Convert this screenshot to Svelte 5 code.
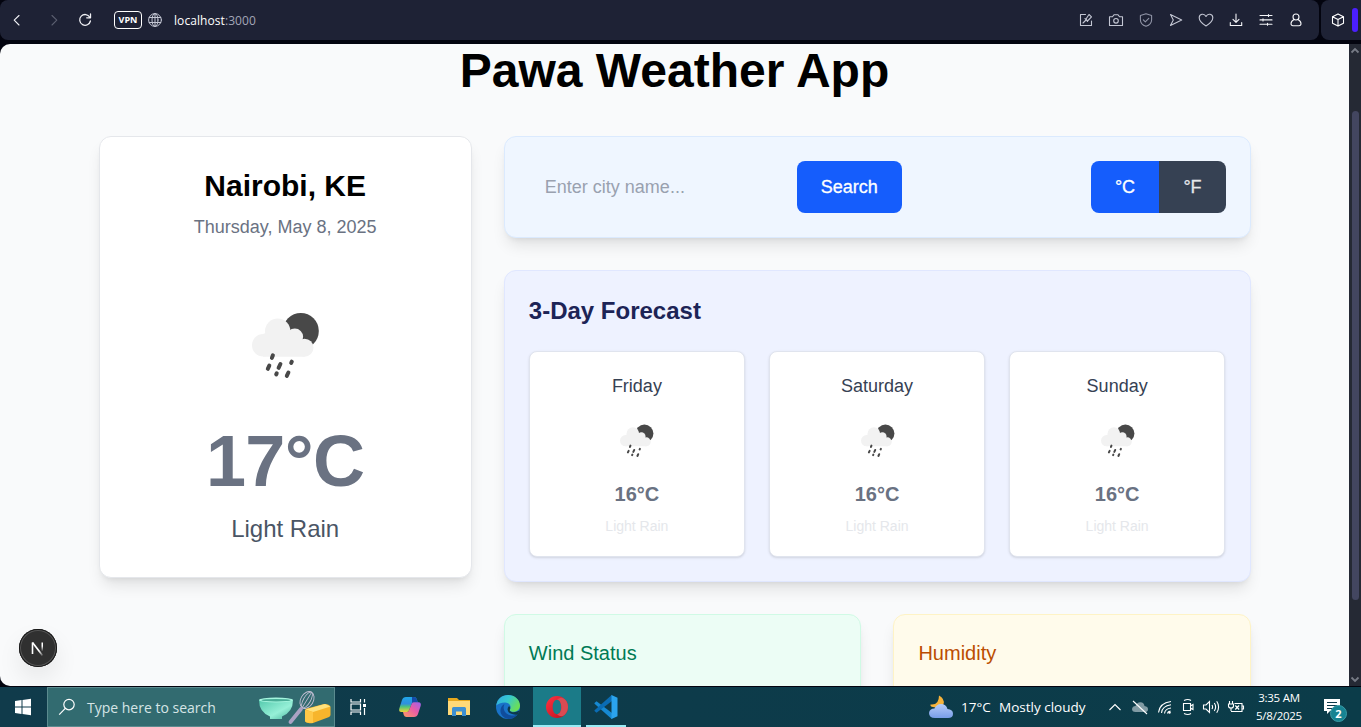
<script>
  const days = ['Friday', 'Saturday', 'Sunday'];
</script>

{#snippet rain(size)}
  <svg width={size} height={size} viewBox="0 0 68 68">
    <circle cx="48.8" cy="19" r="18" fill="#484848" />
    <g fill="#f2f2f2">
      <circle cx="11.3" cy="33.3" r="11.3" />
      <circle cx="25.7" cy="19.3" r="12.7" />
      <circle cx="42.8" cy="24.8" r="8.3" />
      <circle cx="52.5" cy="35.7" r="9" />
      <path d="M11 22L25 17L43 24L53 44.7H11Z" />
    </g>
    <path d="M20.9 43.3l-1 2.6M17.3 53.6l-1.500 3.200M28.400 52l-1.800 3.800M39.800 49.700l-.6 1.200M24.700 61.300l-.5 1.100M36.400 60.500l-1.600 3.400" stroke="#484848" stroke-width="4" stroke-linecap="round" />
  </svg>
{/snippet}

<div class="screen">
  <header>
    <div class="bar">
      <svg class="nav" viewBox="0 0 16 16"><path d="M10 3.5L5.2 8.2L10 13" /></svg>
      <svg class="nav dim" viewBox="0 0 16 16"><path d="M6 3.5L10.8 8.2L6 13" /></svg>
      <svg class="nav reload" viewBox="0 0 16 16"><path d="M12.8 5.2A5.4 5.4 0 1 0 13.4 9M13.5 2v3.8H9.7" /></svg>
      <span class="vpn">VPN</span>
      <svg class="globe" viewBox="0 0 16 16"><circle cx="8" cy="8" r="6.4" /><ellipse cx="8" cy="8" rx="3" ry="6.4" /><path d="M2.3 5.5h11.4M2.3 10.5h11.4M8 1.6v12.8" /></svg>
      <span class="url">localhost<i>:3000</i></span>
      <div class="tools">
        <svg viewBox="0 0 16 16"><path d="M7.5 2.5H2.5v11h11V9" /><path d="M5 11l3-3M7 6.500l2.500 3M8 7l3-4.500 2.500 2.300L9.500 9z" /></svg>
        <svg viewBox="0 0 16 16"><path d="M1.500 4.800h3L6 2.700h4l1.500 2.100h3v8.700h-13z" /><circle cx="8" cy="8.800" r="2.300" /></svg>
        <svg class="soft" viewBox="0 0 16 16"><path d="M8 1.700l5.600 1.800v4.200c0 3.200-2.500 5.500-5.600 6.600-3.100-1.100-5.600-3.400-5.600-6.600V3.500z" /><path d="M5.300 7.900l2 2 3.500-3.600" /></svg>
        <svg viewBox="0 0 16 16"><path d="M2.500 2.500L13.700 8 2.500 13.500 5.300 8z" /></svg>
        <svg viewBox="0 0 16 16"><path d="M8 14C4 11.500 1.200 8.500 1.200 5.700c0-3.800 5-4.800 6.800-1.200 1.800-3.600 6.800-2.600 6.800 1.200C14.800 8.500 12 11.500 8 14z" /></svg>
        <svg class="lit" viewBox="0 0 16 16"><path d="M8 2v8.300M5 7.300l3 3 3-3M2.300 10.500v3h11.400v-3" /></svg>
        <svg class="lit" viewBox="0 0 16 16"><path d="M2 3.500h12M2 7.900h12M2 12.300h12M10.500 2.500v2M5 6.900v2M9.500 11.300v2" /></svg>
        <svg class="lit" viewBox="0 0 16 16"><circle cx="8" cy="5" r="3" /><path d="M6 7.400c-2 1-3 2.600-3 4.400 0 1.200.8 1.900 2 1.900h6c1.200 0 2-.7 2-1.900 0-1.800-1-3.400-3-4.400" /></svg>
      </div>
    </div>
    <div class="side">
      <svg viewBox="0 0 16 16"><path d="M8 1.900l5.500 2.800v6.500L8 14.100l-5.500-2.900V4.700zM2.500 4.700L8 7.600l5.500-2.900M8 7.600v6.500" /></svg>
      <b></b>
    </div>
  </header>

  <div class="view">
    <main>
      <h1>Pawa Weather App</h1>
      <div class="layout">
        <section class="card now">
          <h2>Nairobi, KE</h2>
          <p class="date">Thursday, May 8, 2025</p>
          <div class="picture">{@render rain(68)}</div>
          <p class="temp">17°C</p>
          <p class="sky">Light Rain</p>
        </section>
        <div class="column">
          <section class="card find">
            <input placeholder="Enter city name..." />
            <button class="go">Search</button>
            <div class="units"><button>°C</button><button>°F</button></div>
          </section>
          <section class="card forecast">
            <h3>3-Day Forecast</h3>
            <div class="days">
              {#each days as day}
                <article>
                  <p class="day">{day}</p>
                  <div class="mini">{@render rain(34)}</div>
                  <p class="deg">16°C</p>
                  <p class="faint">Light Rain</p>
                </article>
              {/each}
            </div>
          </section>
          <div class="stats">
            <section class="card wind">Wind Status</section>
            <section class="card humid">Humidity</section>
          </div>
        </div>
      </div>
      <div class="dev">
        <svg width="38" height="38" viewBox="0 0 38 38">
          <defs>
            <linearGradient id="fade1" x1="0" y1="0" x2="0" y2="1"><stop offset=".4" stop-color="#fff" /><stop offset="1" stop-color="#fff" stop-opacity="0" /></linearGradient>
            <linearGradient id="fade2" x1="0" y1="0" x2="1" y2="1"><stop offset=".65" stop-color="#fff" /><stop offset="1" stop-color="#fff" stop-opacity=".2" /></linearGradient>
          </defs>
          <path d="M13.500 25V13.500" stroke="#fff" stroke-width="1.600" />
          <path d="M13.500 13.500L23.500 26.500" stroke="url(#fade2)" stroke-width="1.700" />
          <rect x="22.500" y="13.500" width="1.500" height="9" fill="url(#fade1)" />
        </svg>
      </div>
    </main>
    <div class="scroll">
      <svg width="12" height="12" viewBox="0 0 12 12"><path d="M2.500 8.500L6 5l3.500 3.500" /></svg>
      <div class="thumb"></div>
      <svg width="12" height="12" viewBox="0 0 12 12"><path d="M2.500 3.500L6 7l3.500-3.500" /></svg>
    </div>
  </div>

  <footer>
    <div class="start"><svg width="18" height="18" viewBox="0 0 18 18"><path fill="#fff" d="M1 3l6.500-1v6.500H1zM8.500 1.900L17 .8v7.700H8.500zM1 9.500h6.500V16L1 15zM8.500 9.500H17v7.700l-8.500-1.100z" /></svg></div>
    <div class="search">
      <svg width="18" height="18" viewBox="0 0 18 18" fill="none" stroke="#fff" stroke-width="1.200"><circle cx="11" cy="6.600" r="5.200" /><path d="M7.300 10.300L1.200 16.600" /></svg>
      <span>Type here to search</span>
      <svg class="baking" width="76" height="36" viewBox="0 0 76 36">
        <defs>
          <linearGradient id="bowl" x1="0" y1="0" x2="1" y2="1"><stop stop-color="#54c9ad" /><stop offset=".6" stop-color="#96f0d7" /><stop offset="1" stop-color="#46b39a" /></linearGradient>
        </defs>
        <path d="M2 11q0 12 11 16.500v2.500h12v-2.500q11-4.500 11-16.500z" fill="url(#bowl)" />
        <ellipse cx="19" cy="11" rx="17" ry="2.500" fill="#a4f5de" /><ellipse cx="19" cy="11.200" rx="14.500" ry="1.300" fill="#49ae97" />
        <g fill="none" stroke="#c5c0d5" stroke-width=".9"><ellipse cx="50" cy="11" rx="6.300" ry="9" transform="rotate(30 50 11)" /><ellipse cx="50" cy="11" rx="3.500" ry="9" transform="rotate(30 50 11)" /><path d="M54.500 3.500L45 19" /></g>
        <path d="M33.500 33L44 20" stroke="#aaa2c4" stroke-width="3.800" stroke-linecap="round" />
        <path d="M48 21.500q0-1.500 2-2L67 15q2-.4 4 .5 2.500 1 2.500 2.500v8q0 1.500-2 2.300L56 34q-1.500.5-3.500.2l-3-.6q-1.500-.3-1.500-2z" fill="#f7b52c" /><path d="M48.500 20.500L68 15l5.500 2.500L56 23z" fill="#ffe27c" /><path d="M48 21l8 2v11l-5.500-.4Q48 33.500 48 31.500z" fill="#ffc847" />
      </svg>
    </div>
    <div class="app view-tasks"><svg width="18" height="18" viewBox="0 0 18 18" fill="none" stroke="#fff" stroke-width="1.200"><path d="M2 1v3h9.500V1M2 17v-3h9.500v3" /><path d="M2 6h9.500v6H2zM15.500 1v3.500M15.500 10v7" /><path d="M14 6h3v3h-3z" fill="#fff" stroke="none" /></svg></div>
    <div class="app wide">
      <svg width="24" height="24" viewBox="0 0 24 24">
        <defs>
          <linearGradient id="cpa" x1="0" y1="0" x2="0" y2="1"><stop stop-color="#20a7e8" /><stop offset=".45" stop-color="#2f8fdf" /><stop offset=".65" stop-color="#4fc37a" /><stop offset="1" stop-color="#f1d438" /></linearGradient>
          <linearGradient id="cpb" x1="1" y1="0" x2="0" y2="1"><stop stop-color="#9a63ef" /><stop offset=".45" stop-color="#ea5ba7" /><stop offset="1" stop-color="#ff9c62" /></linearGradient>
        </defs>
        <path d="M8 2h8q2 0 2.700 2l1 3.200h-4q-1.500 0-2 1.600L11 15.500Q10.300 17 8.700 17H3.500Q.5 17 1.300 13.500L4 5Q5 2 8 2z" fill="url(#cpa)" />
        <path d="M14 2h2q2 0 2.700 2l1 3.200h-4q-1.200 0-1.700 1.600z" fill="#164ba8" />
        <path d="M16 22H8.500q-2 0-2.700-2L5 17h3.700q1.600 0 2.300-1.500l2.700-6.700q.5-1.600 2-1.600h4.800q3 0 2.200 3.500L20 19q-1 3-4 3z" fill="url(#cpb)" />
      </svg>
    </div>
    <div class="app shift">
      <svg width="24" height="22" viewBox="0 0 24 22"><path d="M1 2h9l2 2h11v15H1z" fill="#e8a81d" /><path d="M1 5h22v14H1z" fill="#ffd978" /><path d="M5 20v-7.500Q5 11 6.500 11h11q1.500 0 1.500 1.500V20h-4v-4.500H9V20z" fill="#3d8fd1" /></svg>
    </div>
    <div class="app shift">
      <svg width="26" height="26" viewBox="0 0 26 26">
        <defs>
          <linearGradient id="edg" x1="0" y1="0" x2="1" y2=".5"><stop stop-color="#32a8e4" /><stop offset=".5" stop-color="#35c8cf" /><stop offset="1" stop-color="#6ade58" /></linearGradient>
        </defs>
        <circle cx="13" cy="13" r="12" fill="#1973c8" />
        <path d="M1.300 11.500C2.200 5 7 1 13 1c7 0 12 5 12 10.500 0 4-3 6.300-6.500 6.300-3 0-4.500-1.300-3.500-2.800 1.800-2.500-.5-6.500-5-6.500-4 0-7.500 1.500-8.700 3z" fill="url(#edg)" />
        <path d="M9.500 10C7 15 10 20.500 16 21.500c3 .5 5.500-.7 7.500-2.500C21 23 17.500 25 13.500 25 8 24.500 5 20 5.500 16 5.800 13 7.500 11 9.500 10z" fill="#104c9b" />
        <path d="M17 20Q13 19 12.500 15.500q0-2 1.500-3.500 2 1.500.8 3.700-.7 1.600 2 2.300 3.500.7 7.700-1.500l-1.500 4q-3 .5-6-.5z" fill="#0d3a4a" />
      </svg>
    </div>
    <div class="app opera">
      <svg width="24" height="24" viewBox="0 0 24 24">
        <defs><linearGradient id="opr" x1="0" y1="0" x2="1" y2="1"><stop stop-color="#ff3342" /><stop offset="1" stop-color="#b90e1c" /></linearGradient></defs>
        <path fill-rule="evenodd" fill="url(#opr)" d="M12 1a11 11 0 1 0 0 22 11 11 0 1 0 0-22zm0 3.800c2.800 0 4.300 3.300 4.300 7.200s-1.500 7.200-4.300 7.200-4.300-3.300-4.300-7.200S9.200 4.800 12 4.800z" />
        <path d="M12 4.800Q16 .9 20 4.500 23 7.500 23 12t-3.300 7.700Q16 23 12 19.200c2.800 0 4.300-3.300 4.300-7.200S14.800 4.800 12 4.800z" fill="#d94b53" />
      </svg>
    </div>
    <div class="app code">
      <svg width="26" height="26" viewBox="0 0 26 26"><path d="M1.500 9L3.500 7.200 19 19v6.200L1.500 9.800z" fill="#1689d2" /><path d="M1.500 17l2 1.800L19 7V.8L1.500 16.200z" fill="#0a6cb4" /><path d="M18.500 1l6 2.800v18.400l-6 2.800z" fill="#2ba4ee" /></svg>
    </div>
    <div class="weather">
      <svg width="26" height="26" viewBox="0 0 26 26">
        <defs><linearGradient id="cl" x1="0" y1="0" x2="0" y2="1"><stop stop-color="#b6ccf9" /><stop offset="1" stop-color="#789ee9" /></linearGradient></defs>
        <path d="M11 1.500Q17 5 15.500 10 13 15.500 5 13 2 12.500 2.500 10.500 11 11.500 11 1.500z" fill="#f6b33b" />
        <path d="M7 24Q1 24 1 19q.5-4.500 5.500-4.500Q8.500 10 13 10q5 0 6.500 5 5.500.5 5.500 4.700 0 4.300-5 4.300z" fill="url(#cl)" />
      </svg>
      <span class="wt">17°C</span><span class="ws">Mostly cloudy</span>
    </div>
    <div class="tray">
      <svg width="14" height="16" viewBox="0 0 14 16"><path d="M1.500 11L7 5.500l5.500 5.500" /></svg>
      <svg class="t2" width="18" height="16" viewBox="0 0 18 16"><path d="M4.500 13Q1 13 1 10q.5-3 3.500-3Q6 3 9.500 3.200 13 3.500 13.500 7q3.500.5 3.500 3.200Q17 13 14 13z" fill="#819ba4" stroke="none" /><path d="M2 2l14 13" /></svg>
      <svg class="t3" width="16" height="16" viewBox="0 0 16 16"><path d="M1.500 13.500Q2.500 4 14 2.500M4.500 14Q5 7 14 5.700M7.500 14.500q.5-4.700 6.500-5.500M10.500 14.500q.2-2 3-2.500" /><circle cx="12.500" cy="13.500" r="1.200" fill="#fff" stroke="none" /></svg>
      <svg class="t4" width="16" height="18" viewBox="0 0 16 18"><path d="M3.500 5.500h7v7h-7zM10.500 8l2.500-1.500v5L10.500 10M4 2.500Q8 .5 11 2.500M4 15.500q4 2 7 0" /></svg>
      <svg class="t5" width="18" height="16" viewBox="0 0 18 16"><path d="M1.500 6h2.500l3.500-3.500v11L4 10H1.500zM10 6q1.200 2 0 4M12.300 4q2.700 4 0 8M14.700 2.300q3.800 5.700 0 11.400" /></svg>
      <svg class="t6" width="18" height="16" viewBox="0 0 18 16"><path d="M2.500 2v3M5.500 2v3M1.500 5h5v2Q6.500 9 4 9 1.500 9 1.500 7zM4 9v3M7.500 4.500H15v8H4M15.500 7h1v3h-1M8.300 6.500l3.800 4M12.100 6.500l-3.800 4" /></svg>
    </div>
    <div class="clock"><span>3:35 AM</span><span>5/8/2025</span></div>
    <div class="note">
      <svg width="18" height="18" viewBox="0 0 18 18"><path fill="#fff" d="M1 1h16v12H7l-3 3v-3H1z" /><path d="M4 4.500h10M4 7.500h10M4 10.500h6" stroke="#0d3a4a" stroke-width="1.100" /></svg>
      <b>2</b>
    </div>
  </footer>
</div>

<style>
  :global(body) { background: #03040f; overflow: hidden; }
  * { box-sizing: border-box; }
  h1, h2, h3, p { margin: 0; }
  svg { flex: none; display: block; }
  .screen { width: 1361px; height: 727px; display: flex; flex-direction: column; background: #03040f; overflow: hidden; font-family: "Liberation Sans", Arial, sans-serif; }
  header { height: 40px; flex: none; display: flex; gap: 2px; font-family: "Open Sans", "Noto Sans", sans-serif; }
  header svg { width: 16px; height: 16px; fill: none; stroke: #c3c6d3; stroke-width: 1.1; stroke-linejoin: round; stroke-linecap: round; }
  .bar { width: 1319px; flex: none; background: #1e2235; border-radius: 8px; display: flex; align-items: center; padding-left: 9px; }
  .bar .nav { stroke: #f0f1f5; margin-right: 21px; }
  .bar .dim { stroke: #5b5f70; margin-right: 15px; }
  .bar .reload { margin-right: 21px; stroke-width: 1.3; }
  .vpn { width: 28px; height: 18px; border: 1.5px solid #fff; border-radius: 4px; color: #fff; font-size: 9px; font-weight: 700; line-height: 16px; text-align: center; }
  header .globe { margin: 0 11px 0 5px; stroke-width: 1; }
  .url { color: #fff; font-size: 12px; letter-spacing: .07px; }
  .url i { font-style: normal; color: #a3a6b7; }
  .tools { margin: 0 15px 0 auto; display: flex; gap: 14px; }
  header .soft { stroke: #8f93a5; }
  header .lit { stroke: #f4f5f8; stroke-width: 1.1; }
  .side { width: 40px; flex: none; background: #1e2235; border-radius: 8px 0 0 8px; display: flex; align-items: center; padding-left: 9px; }
  .side svg { stroke: #fff; }
  .side b { width: 6px; height: 24px; border-radius: 3px; background: #4b1fff; margin: 0 0 0 6px; }

  .view { height: 642px; flex: none; margin-top: 4px; display: flex; }
  main { width: 1349px; background: #f9fafb; border-radius: 10px 0 0 10px; overflow: hidden; position: relative; padding: 4px 98.5px 0; }
  h1 { font-size: 48px; line-height: 46px; text-align: center; color: #000; margin-bottom: 42px; }
  .layout { display: grid; grid-template-columns: 373.33px 747.2px; gap: 32px; align-items: start; }
  .card { border: 1px solid; border-radius: 12px; box-shadow: 0 10px 15px -3px #0000001a, 0 4px 6px -4px #0000001a; }
  .now { background: #fff; border-color: #e5e7eb; padding: 32px; height: 442px; text-align: center; }
  h2 { font-size: 30px; line-height: 34px; margin-bottom: 10px; }
  .date { font-size: 18px; line-height: 28px; color: #6a7282; }
  .picture { height: 184px; padding: 71px 0 0 1px; display: flex; justify-content: center; align-items: flex-start; }
  .temp { font-size: 72px; line-height: 72px; font-weight: 700; color: #6a7282; margin-bottom: 16px; letter-spacing: -.6px; }
  .sky { font-size: 24px; line-height: 32px; color: #4a5565; }
  .column { display: flex; flex-direction: column; gap: 32px; }
  .find { height: 102px; background: #eff6ff; border-color: #dbeafe; padding: 24px; display: flex; gap: 16px; }
  input { width: 252px; border: 0; background: none; font: 18px "Liberation Sans", Arial, sans-serif; padding: 0 16px; outline: 0; }
  input::placeholder { color: #99a1af; opacity: 1; }
  button { border: 0; font: 18px "Liberation Sans", Arial, sans-serif; color: #fff; -webkit-text-stroke: .3px currentColor; padding: 0; }
  .go { width: 105px; background: #155dfc; border-radius: 8px; }
  .units { margin-left: auto; width: 135px; display: flex; border-radius: 8px; overflow: hidden; }
  .units button { width: 68px; background: #155dfc; }
  .units button + button { width: 67px; background: #364153; color: #e5e7eb; }
  .forecast { height: 312px; background: #eef2ff; border-color: #e0e7ff; padding: 24px; }
  h3 { font-size: 24px; line-height: 32px; color: #1c2456; margin-bottom: 24px; }
  .days { width: 696.4px; display: grid; grid-template-columns: repeat(3, 1fr); gap: 24px; }
  article { height: 206px; background: #fff; border: 1px solid #e0e4ee; border-radius: 8px; box-shadow: 0 1px 3px #0000001a, 0 1px 2px -1px #0000001a; padding: 20px; text-align: center; }
  .day { font-size: 18px; line-height: 28px; color: #364153; }
  .mini { height: 80px; padding: 24px 0 0 1px; display: flex; justify-content: center; align-items: flex-start; }
  .deg { font-size: 20px; line-height: 28px; font-weight: 700; color: #6a7282; margin-bottom: 8px; }
  .faint { font-size: 14px; line-height: 20px; color: #e5e7eb; }
  .stats { display: grid; grid-template-columns: 1fr 1fr; gap: 32px; }
  .stats .card { height: 170px; padding: 24px; font-size: 20px; line-height: 28px; }
  .wind { background: #ecfdf5; border-color: #d0fae5; color: #007a55; }
  .humid { background: #fffbeb; border-color: #fef3c6; color: #bb4d00; }
  .dev { position: absolute; left: 19px; bottom: 19px; width: 38px; height: 38px; border-radius: 50%; background: #303030; box-shadow: inset 0 0 0 1px #171717, inset 0 0 0 2px #555, 0 12px 24px #00000014; }

  .scroll { width: 12px; background: #252934; display: flex; flex-direction: column; align-items: center; }
  .scroll svg { fill: none; stroke: #777b86; stroke-width: 1.8; }
  .thumb { width: 7px; height: 489px; margin: 55px 0 auto 1px; border-radius: 4px; background: #434660; }

  footer { height: 40px; flex: none; margin-top: 1px; background: linear-gradient(90deg, #103b4b, #0d3b4a 50%, #0b3c49); display: flex; align-items: center; color: #fff; font-family: "Open Sans", "Noto Sans", sans-serif; white-space: nowrap; }
  footer > div { flex: none; }
  .start { width: 47px; display: flex; justify-content: center; padding-right: 2px; }
  .search { width: 288px; height: 40px; background: #326b70; border: 1px solid #5b8b8f; display: flex; align-items: center; padding-left: 10px; }
  .search span { font-size: 14px; margin-left: 11px; color: #d6e5e6; width: 170px; }
  .baking { margin-top: -1px; }
  .app { width: 49px; height: 40px; display: flex; align-items: center; justify-content: center; }
  .app.wide { width: 51px; }
  .app.shift { padding-right: 2px; }
  .view-tasks { padding-right: 3px; }
  .opera { background: #1b7b88; border-bottom: 2px solid #99ebf5; width: 48px; padding-top: 2px; }
  .code { width: 40px; margin-left: 5px; border-bottom: 2px solid #99ebf5; padding-top: 2px; }
  .weather { margin-left: 302px; width: 158px; display: flex; align-items: center; font-size: 13.5px; }
  .wt { margin-left: 7px; width: 38px; flex: none; }
  .tray { margin-left: 22px; display: flex; align-items: center; width: 146px; }
  .tray svg { fill: none; stroke: #fff; stroke-width: 1.1; }
  .t2 { margin-left: 9px; } .t3 { margin-left: 8px; } .t4 { margin-left: 7px; } .t5 { margin-left: 6px; } .t6 { margin-left: 7px; }
  .clock { width: 50px; margin-left: 0; margin-right: 1px; display: flex; flex-direction: column; align-items: center; font-size: 11.5px; line-height: 18px; letter-spacing: -.25px; }
  .note { position: relative; margin-left: 18px; }
  .note b { position: absolute; left: 7px; top: 7px; width: 17px; height: 17px; border-radius: 50%; background: #168392; border: 1px solid #3b9ba6; font-size: 11px; line-height: 15px; text-align: center; }
</style>
